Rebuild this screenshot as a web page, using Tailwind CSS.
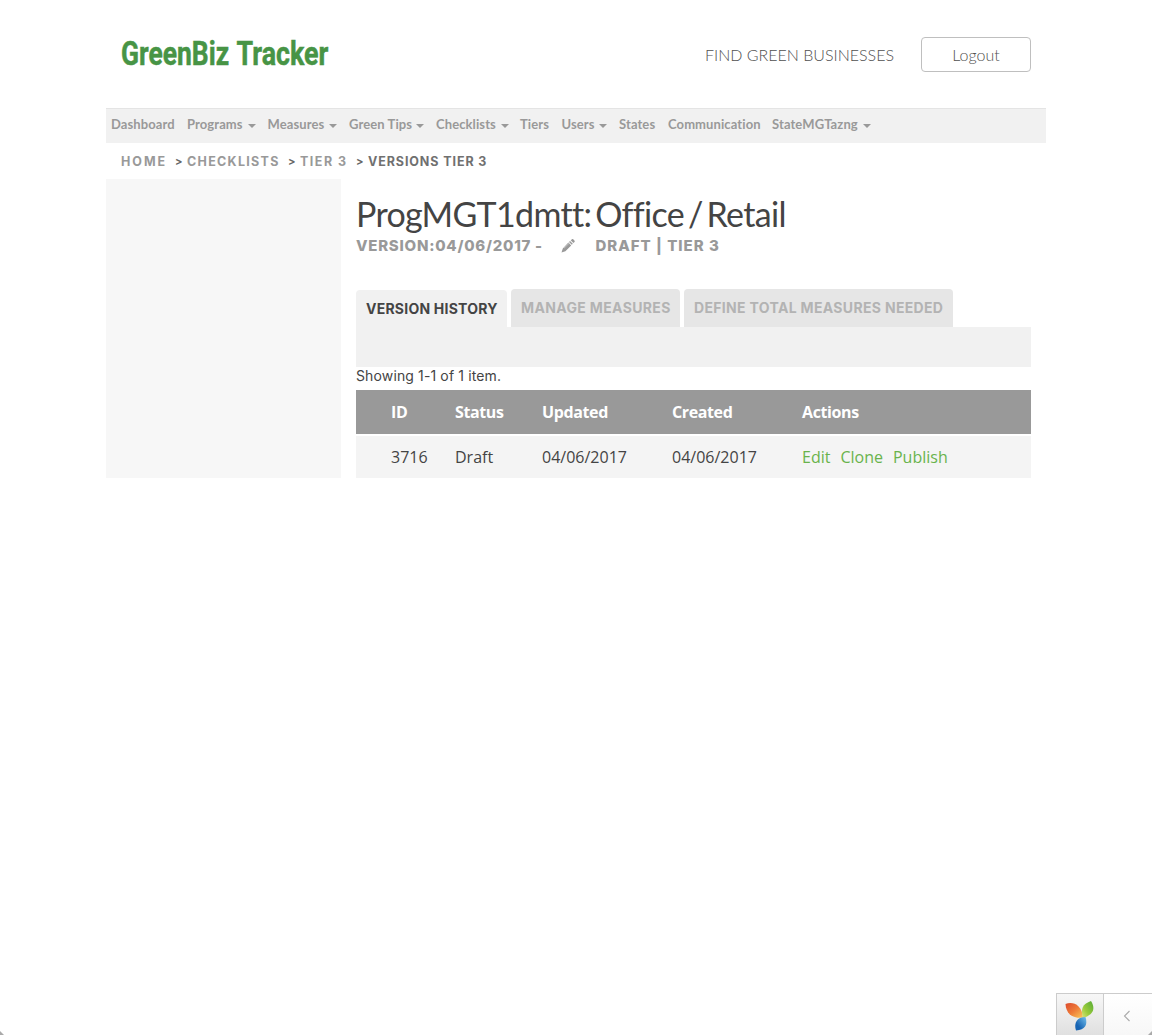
<!DOCTYPE html>
<html lang="en">
<head>
<meta charset="utf-8">
<title>GreenBiz Tracker</title>
<script src="https://cdn.jsdelivr.net/npm/@tailwindcss/browser@4"></script>
</head>
<body class="bg-white">
<div class="relative h-[1035px] w-[1152px] overflow-hidden bg-white font-['Lato',sans-serif]">
  <div class="mx-auto w-[940px]">
    <header class="flex h-[108px] items-start px-[15px]">
      <svg class="mt-[34px] h-[40px] w-[212px]" viewBox="0 0 212 40" role="img" aria-label="GreenBiz Tracker">
        <g font-family="Roboto, sans-serif" font-weight="700" font-size="34" fill="#479445" stroke="#479445" stroke-width=".5" transform="translate(0 30.500) scale(.68 1)">
          <text x="0" y="0" textLength="159" lengthAdjust="spacingAndGlyphs">GreenBiz</text>
          <text x="170" y="0" textLength="135" lengthAdjust="spacingAndGlyphs">Tracker</text>
        </g>
      </svg>
      <a class="mt-[43px] ml-auto whitespace-nowrap text-[16px] leading-6 font-light text-[#505050]">FIND GREEN BUSINESSES</a>
      <a class="mt-[37px] ml-[27px] flex h-[35px] w-[110px] items-center justify-center rounded border border-[#bfbfbf] text-[16px] font-light text-[#505050]">Logout</a>
    </header>

    <nav class="flex h-[35px] border-t border-[#e4e4e4] bg-[#f1f1f1] pb-[3px] pl-[5px] text-[13px] leading-[31px] font-bold tracking-[.1px] whitespace-nowrap text-[#999]">
      <a class="w-[76px]">Dashboard</a>
      <a class="flex h-[31px] w-[80.5px] items-center">Programs<i class="mt-[3px] ml-[5px] border-x-4 border-t-4 border-x-transparent"></i></a>
      <a class="flex h-[31px] w-[81.5px] items-center">Measures<i class="mt-[3px] ml-[5px] border-x-4 border-t-4 border-x-transparent"></i></a>
      <a class="flex h-[31px] w-[87px] items-center">Green Tips<i class="mt-[3px] ml-[4px] border-x-4 border-t-4 border-x-transparent"></i></a>
      <a class="flex h-[31px] w-[84px] items-center">Checklists<i class="mt-[3px] ml-[5px] border-x-4 border-t-4 border-x-transparent"></i></a>
      <a class="w-[41.5px]">Tiers</a>
      <a class="flex h-[31px] w-[57.5px] items-center">Users<i class="mt-[3px] ml-[4px] border-x-4 border-t-4 border-x-transparent"></i></a>
      <a class="w-[49px]">States</a>
      <a class="w-[104px]">Communication</a>
      <a class="flex h-[31px] items-center">StateMGTazng<i class="mt-[3px] ml-[5px] border-x-4 border-t-4 border-x-transparent"></i></a>
    </nav>

    <div class="flex h-[36px] pl-[15px] font-['Inter',sans-serif] text-[12.5px] leading-[37px] font-bold whitespace-nowrap text-[#999]">
      <a class="w-[54px] tracking-[2px]">HOME</a><span class="w-[12px] text-[11px] text-[#666]">&gt;</span>
      <a class="w-[101px] tracking-[1.3px]">CHECKLISTS</a><span class="w-[12px] text-[11px] text-[#666]">&gt;</span>
      <a class="w-[56px] tracking-[1.5px]">TIER 3</a><span class="w-[12px] text-[11px] text-[#666]">&gt;</span>
      <span class="tracking-[.9px] text-[#707070]">VERSIONS TIER 3</span>
    </div>

    <div class="flex">
      <aside class="h-[299px] w-[235px] bg-[#f7f7f7]"></aside>
      <main class="ml-[15px] w-[675px] text-[#444]">
        <h1 class="mt-[15px] h-[40px] text-[34px] leading-[40px] tracking-[-.67px] whitespace-nowrap [word-spacing:-4.2px]">ProgMGT1dmtt: Office / Retail</h1>
        <div class="flex h-[24px] font-['Inter',sans-serif] text-[15px] leading-[24px] font-extrabold whitespace-nowrap text-[#999]">
          <span class="w-[205px] tracking-[.75px]">VERSION:04/06/2017 -</span>
          <svg class="mt-[5px] h-[14px] w-[14px]" viewBox="0 0 14 14" fill="#999"><path d="M9.7 1.3 11 .3c.5-.4 1-.3 1.4.1l1 1c.5.5.5 1 .1 1.5l-1.1 1.2zM9 2l2.8 2.8-1 1L8 3zM7.4 3.6l2.8 2.8-5.8 5.8-3.9 1.4 1.3-4.2z"/><path d="m3 9.200 5-4.800" stroke="#fff" stroke-width=".4"/></svg>
          <span class="ml-[20.5px] tracking-[1px]">DRAFT | TIER 3</span>
        </div>

        <div class="mt-[31px] flex h-[38px] items-end gap-1 font-['Inter',sans-serif] text-[14px] leading-[37px] font-bold whitespace-nowrap">
          <a class="h-[37px] w-[151px] rounded-t bg-[#f1f1f1] pl-[10px] tracking-[.23px]">VERSION HISTORY</a>
          <a class="h-[38px] w-[169px] rounded-t bg-[#e6e6e6] pl-[10px] tracking-[.35px] text-[#b3b3b3]">MANAGE MEASURES</a>
          <a class="h-[38px] w-[269px] rounded-t bg-[#e6e6e6] pl-[10px] tracking-[.33px] text-[#b3b3b3]">DEFINE TOTAL MEASURES NEEDED</a>
        </div>
        <div class="h-10 bg-[#f1f1f1]"></div>
        <p class="h-[23px] font-['Inter',sans-serif] text-[14px] leading-[18px] tracking-[.13px]">Showing 1-1 of 1 item.</p>

        <div class="font-['Open_Sans',sans-serif] text-[16px] whitespace-nowrap">
          <div class="grid h-[44px] grid-cols-[64px_87px_130px_130px_1fr] items-center bg-[#999] pl-[35px] font-bold tracking-[-.38px] text-white">
            <span>ID</span><span>Status</span><span>Updated</span><span>Created</span><span>Actions</span>
          </div>
          <div class="mt-[2px] grid h-[42px] grid-cols-[64px_87px_130px_130px_1fr] items-center bg-[#f4f4f4] pl-[35px]">
            <span>3716</span><span>Draft</span><span>04/06/2017</span><span>04/06/2017</span>
            <span class="flex gap-[10px] text-[#69b34c]"><a>Edit</a><a>Clone</a><a>Publish</a></span>
          </div>
        </div>
      </main>
    </div>
  </div>

  <div class="absolute right-0 bottom-0 flex h-[42px] w-[96px] border-t border-l border-[#ccc]">
    <div class="flex w-[46px] justify-center bg-linear-to-b from-[#f7f7f7] to-[#e0e0e0] pt-[7px] pr-[1px]">
      <svg class="h-[31px] w-[29px]" viewBox="0 0 29 31">
        <defs>
          <linearGradient id="o" x1="0" y1="0" x2="1" y2="1"><stop offset="0" stop-color="#dc4a2d"/><stop offset=".5" stop-color="#ee7b38"/><stop offset="1" stop-color="#f8c95c"/></linearGradient>
          <linearGradient id="g" x1="1" y1="0" x2="0" y2="1"><stop offset="0" stop-color="#55aa35"/><stop offset=".6" stop-color="#9acb3b"/><stop offset="1" stop-color="#dce47d"/></linearGradient>
          <linearGradient id="b" x1="1" y1="0" x2="0" y2="1"><stop offset="0" stop-color="#73c0ec"/><stop offset=".7" stop-color="#1764b3"/></linearGradient>
        </defs>
        <path d="M.5 3C7 0 17 3 18 16.500 8 18 1 13 .5 3Z" fill="url(#o)"/>
        <path d="M26 0C17 3 15.500 9 18 17 28 14 31 8 26 0Z" fill="url(#g)"/>
        <path d="M20.500 16C12 16 8.500 22 11 29.500 20 29 23 24 20.500 16Z" fill="url(#b)"/>
      </svg>
    </div>
    <div class="relative flex flex-1 items-center justify-center border-l border-[#ccc] bg-linear-to-b from-white to-[#f7f7f7] pt-[2px] pr-[2px]">
      <svg class="h-[12px] w-[8px]" viewBox="0 0 8 12" fill="none" stroke="#aaa" stroke-width="1.100"><path d="M6.500 1 1.500 6l5 5"/></svg>
      <svg class="absolute right-0 bottom-0 h-1 w-1" viewBox="0 0 4 4"><path d="M4 0v4H0z" fill="#aaa"/></svg>
    </div>
  </div>
  <svg class="absolute bottom-0 left-0 h-1 w-1" viewBox="0 0 4 4"><path d="M0 0v4h4z" fill="#aaa"/></svg>
</div>
</body>
</html>
